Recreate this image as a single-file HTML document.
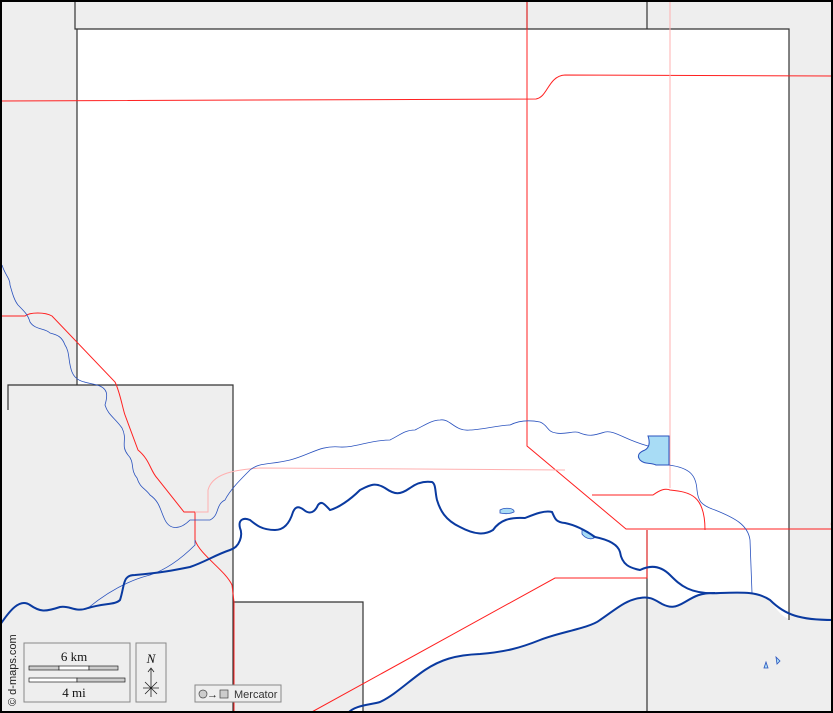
<!DOCTYPE html>
<html><head><meta charset="utf-8"><style>
html,body{margin:0;padding:0;background:#fff;}
svg{display:block;}
</style></head><body>
<svg width="833" height="713" viewBox="0 0 833 713" xmlns="http://www.w3.org/2000/svg" font-family="Liberation Sans, sans-serif">
<rect x="0" y="0" width="833" height="713" fill="#eeeeee"/>
<!-- white county -->
<path d="M77,29 L789,29 L789,619 C783,617 776,610 770,600 C758,592 745,592 720,593 L715,593 C700,593 695,596 685,602 C675,608 670,608 662,604 C655,600 650,596 640,598 C625,600 615,610 600,620 C590,628 560,632 540,640 C520,648 505,652 480,654 C455,655 440,660 425,670 C410,680 395,695 380,702 C370,705 355,705 348,713 L363,713 L363,602 L233,602 L233,385 L77,385 Z" fill="#ffffff"/>
<!-- county borders -->
<g fill="none" stroke="#333" stroke-width="1.2">
<path d="M75,0 L75,29 L789,29 L789,620"/>
<path d="M527,0 L527,29 M647,0 L647,29"/>
<path d="M77,29 L77,385"/>
<path d="M8,410 L8,385 L233,385 L233,713"/>
<path d="M233,602 L363,602 L363,713"/>
<path d="M647,530 L647,713"/>
</g>
<!-- roads -->
<g fill="none" stroke="#ff2020" stroke-width="1">
<path d="M0,101 L536,99 C548,97 548,76 565,75 L833,76"/>
<path d="M527,0 L527,446 L626,529 L833,529 C830,525 832,520 833,518"/>
<path d="M0,316 L25,316 C30,312 45,312 52,316 L115,382 C120,392 123,410 125,415 L138,450 C150,460 150,470 157,478 L184,512 L195,512 L195,540 C200,555 225,570 232,585 L234,602 L234,713"/>
<path d="M592,495 L653,495 C660,490 665,488 670,490 C690,492 705,495 705,530"/>
<path d="M647,530 L647,578 L555,578 L310,713"/>
</g>
<g fill="none" stroke="#ffb0b0" stroke-width="1">
<path d="M670,0 L670,488"/>
<path d="M195,512 L208,512 L208,490 C212,475 230,470 260,468 L565,470"/>
</g>
<!-- rivers thin -->
<g fill="none" stroke="#2a52be" stroke-width="0.8">
<path d="M2,265 C5,275 10,278 10,285 C12,292 14,300 18,305 C25,312 28,315 30,322 C35,330 45,328 50,333 C58,335 62,337 65,345 C70,352 68,362 72,372 C76,382 85,382 97,385 C108,388 108,395 105,405 C108,415 115,418 122,428 C128,440 120,445 128,455 C135,462 130,470 137,478 C140,488 145,488 150,495 C160,502 160,510 165,520 C170,530 180,530 190,520 L210,520 C220,515 215,505 225,500 C230,490 240,480 250,470 C260,462 270,465 290,460 C310,455 320,445 340,447 C355,448 370,440 390,440 C400,435 405,430 415,430 C425,425 432,420 440,420 C450,418 455,432 470,430 C480,430 500,425 510,425 C520,420 530,420 540,422 C548,425 547,432 556,433 C565,435 575,430 580,433 C590,437 595,435 605,432 C615,430 625,440 648,446"/>
<path d="M669,465 C690,468 696,475 697,490 C698,500 700,505 715,510 C735,518 748,525 750,540 L752,593"/>
<path d="M88,608 C110,590 130,580 150,575 C165,570 180,560 195,545 L195,540"/>
</g>
<!-- lake -->
<path d="M648,436 L669,436 L669,465 L656,465 C650,462 645,465 640,460 C636,455 640,452 645,450 C650,447 650,442 648,436 Z" fill="#a8dcf5" stroke="#2a52be" stroke-width="1"/>
<path d="M582,530 C588,530 592,535 594,538 C590,540 585,538 582,534 Z" fill="#a8dcf5" stroke="#2a52be" stroke-width="0.8"/>
<path d="M500,510 C505,507 515,508 514,512 C510,514 505,514 500,513 Z" fill="#a8dcf5" stroke="#2a52be" stroke-width="0.8"/>
<path d="M766,662 L768,668 L764,668 Z M776,657 L780,661 L777,664 Z" fill="#a8dcf5" stroke="#2a52be" stroke-width="0.8"/>
<!-- main rivers thick -->
<g fill="none" stroke="#0a3aa0" stroke-width="2">
<path d="M0,625 C10,610 20,598 30,605 C40,612 45,612 60,607 C70,605 75,613 88,608 C105,603 115,605 120,600 C125,585 122,575 135,575 C160,573 175,570 190,567 C205,562 215,555 230,550 C240,547 243,535 240,528 C238,520 243,517 250,520 C256,525 262,530 275,530 C285,530 290,522 293,512 C296,505 300,507 304,510 C310,515 315,512 318,505 C322,500 325,505 330,510 C338,508 350,500 360,490 C370,485 375,482 385,488 C395,495 400,495 410,488 C418,482 425,481 432,482 C436,484 435,492 437,500 C440,510 445,520 460,527 C475,535 485,535 493,530 C500,520 510,517 525,518 C535,514 545,510 552,512 C555,518 555,522 565,523 C575,525 585,530 595,537 C610,540 618,545 620,552 C622,565 630,568 640,570 C650,565 660,565 670,575 C680,585 690,595 720,593 C745,592 758,592 770,600 C785,615 800,620 833,620"/>
<path d="M348,713 C355,705 370,705 380,702 C395,695 410,680 425,670 C440,660 455,655 480,654 C505,652 520,648 540,640 C560,632 590,628 600,620 C615,610 625,600 640,598 C650,596 655,600 662,604 C670,608 675,608 685,602 C695,596 700,593 715,593"/>
</g>
<!-- frame -->
<rect x="1" y="1" width="831" height="711" fill="none" stroke="#000" stroke-width="2"/>
<!-- legend -->
<text x="16" y="706" font-size="11" fill="#222" transform="rotate(-90 16 706)">© d-maps.com</text>
<rect x="24" y="643" width="106" height="59" fill="#eeeeee" stroke="#888" stroke-width="1"/>
<text x="74" y="661" font-size="13" font-family="Liberation Serif, serif" text-anchor="middle" fill="#111">6 km</text>
<rect x="29" y="666" width="30" height="4" fill="#ccc" stroke="#222" stroke-width="0.7"/>
<rect x="59" y="666" width="30" height="4" fill="#fff" stroke="#222" stroke-width="0.7"/>
<rect x="89" y="666" width="29" height="4" fill="#ccc" stroke="#222" stroke-width="0.7"/>
<rect x="29" y="678" width="48" height="4" fill="#fff" stroke="#222" stroke-width="0.7"/>
<rect x="77" y="678" width="48" height="4" fill="#ccc" stroke="#222" stroke-width="0.7"/>
<text x="74" y="697" font-size="13" font-family="Liberation Serif, serif" text-anchor="middle" fill="#111">4 mi</text>
<rect x="136" y="643" width="30" height="59" fill="#eeeeee" stroke="#888" stroke-width="1"/>
<text x="151" y="663" font-size="13" font-style="italic" font-family="Liberation Serif, serif" text-anchor="middle" fill="#111">N</text>
<g stroke="#222" stroke-width="0.8" fill="none">
<path d="M151,669 L151,697 M148,672 L151,668 L154,672 M143,688 L159,688 M145,682 L157,694 M157,682 L145,694"/>
</g>
<rect x="195" y="685" width="86" height="17" fill="#eeeeee" stroke="#888" stroke-width="1"/>
<circle cx="203" cy="694" r="4" fill="#ccc" stroke="#444" stroke-width="0.7"/>
<text x="207" y="698" font-size="11" fill="#222">→</text>
<rect x="220" y="690" width="8" height="8" fill="#ccc" stroke="#444" stroke-width="0.7"/>
<text x="234" y="698" font-size="11" fill="#333">Mercator</text>
</svg>
</body></html>
